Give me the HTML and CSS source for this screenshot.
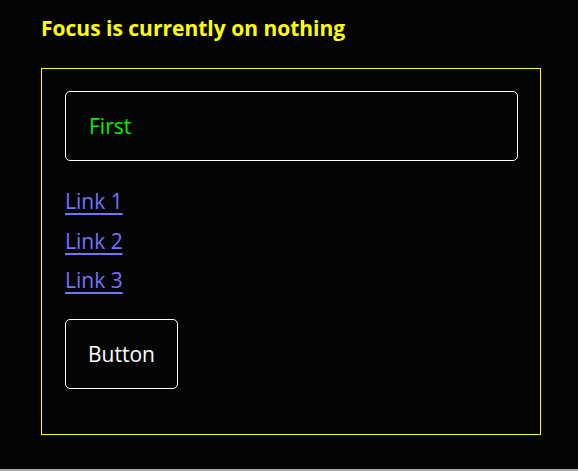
FILE: index.html
```html
<!DOCTYPE html>
<html>
<head>
<meta charset="utf-8">
<link rel="stylesheet" href="styles.css">
</head>
<body>
<main class="page">
  <h1 class="status">Focus is currently on nothing</h1>
  <section class="box">
    <div class="field"><span class="field-text">First</span></div>
    <nav class="links">
      <a class="link" href="#">Link 1</a>
      <a class="link" href="#">Link 2</a>
      <a class="link" href="#">Link 3</a>
    </nav>
    <button class="btn" type="button">Button</button>
  </section>
  <div class="edge"></div>
</main>
</body>
</html>
```
FILE: styles.css
```css
html, body {
  margin: 0;
  padding: 0;
  background: #050505;
}
.page {
  box-sizing: border-box;
  height: 471px;
  padding: 13px 0 0 0;
  display: flex;
  flex-direction: column;
  font-family: "Open Sans", "Noto Sans", sans-serif;
}
.status {
  margin: 0 0 0 41px;
  color: #ffff00;
  font-size: 21px;
  font-weight: 700;
  line-height: 30px;
}
.box {
  margin: 25px 0 0 41px;
  box-sizing: border-box;
  width: 500px;
  height: 367px;
  border: 1px solid #ffff00;
  padding: 22px 23px;
  display: flex;
  flex-direction: column;
  align-items: flex-start;
}
.field {
  box-sizing: border-box;
  width: 453px;
  height: 70px;
  border: 1px solid #fff;
  border-radius: 5px;
  padding-left: 23px;
  display: flex;
  align-items: center;
}
.field-text {
  color: #00f000;
  font-size: 21px;
}
.links {
  margin-top: 26px;
  display: flex;
  flex-direction: column;
  gap: 11px;
}
.link {
  color: #7373ff;
  font-size: 21px;
  line-height: 28.5px;
  text-decoration-thickness: 2px;
  text-underline-offset: 4px;
}
.btn {
  margin-top: 24px;
  box-sizing: border-box;
  width: 113px;
  height: 70px;
  background: #050505;
  color: #fff;
  border: 1px solid #fff;
  border-radius: 5px;
  font-family: inherit;
  font-size: 21px;
  padding: 0;
}
.edge {
  margin-top: auto;
  height: 2px;
  background: #a8a8a8;
}
```
